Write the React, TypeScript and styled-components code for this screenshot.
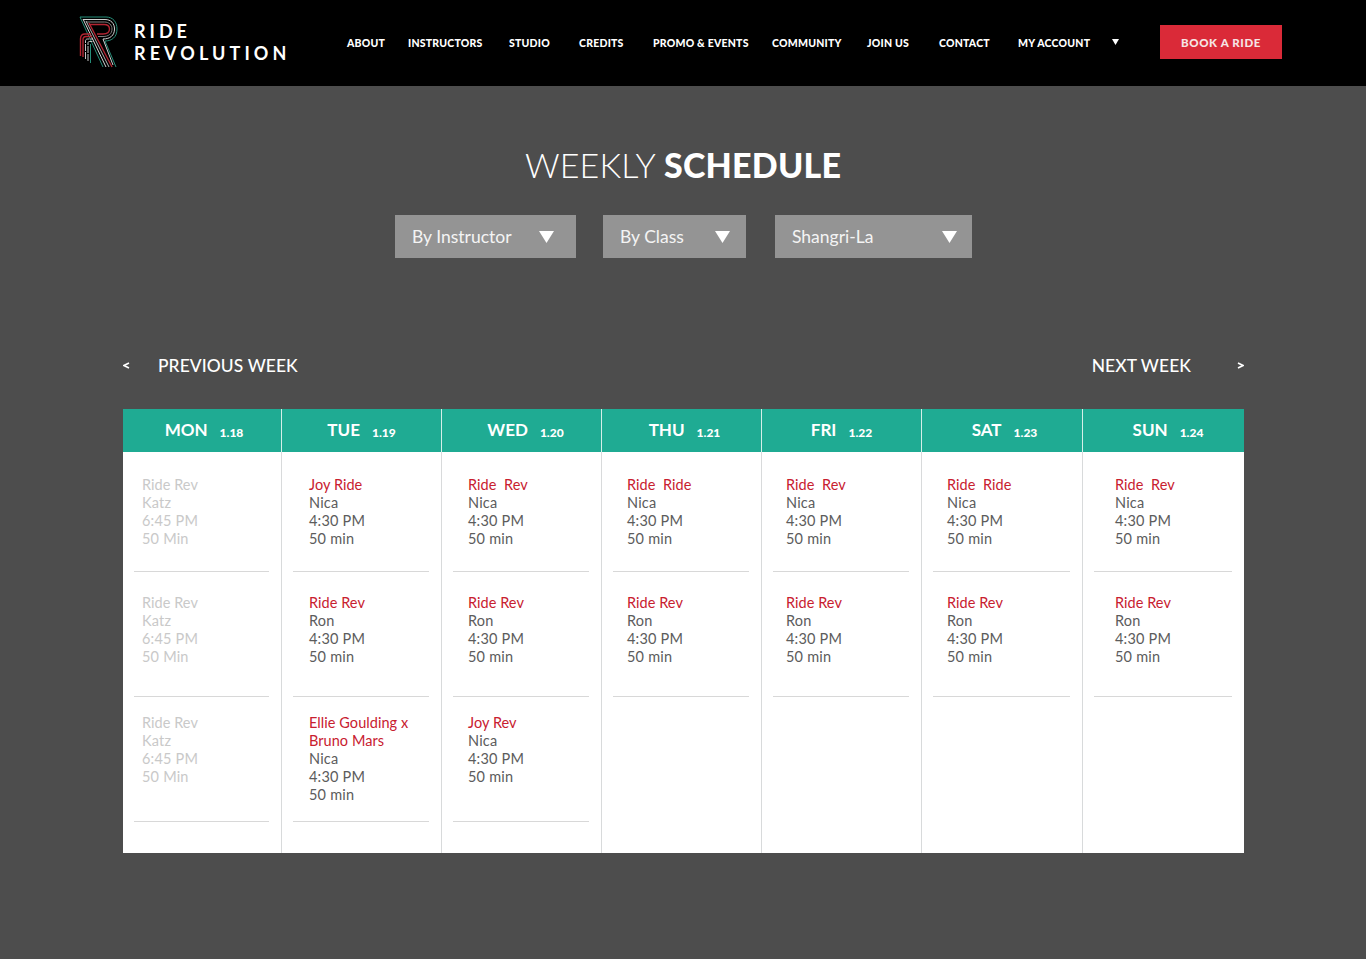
import React from 'react';
import styled, { createGlobalStyle } from 'styled-components';

const GlobalStyle = createGlobalStyle`
  html, body {
    margin: 0;
    padding: 0;
    background-color: #4d4d4d;
    font-family: 'Lato', 'Liberation Sans', sans-serif;
  }
`;

const Page = styled.div`
  width: 1366px;
  height: 959px;
  overflow: hidden;
`;

const Header = styled.header`
  height: 86px;
  background-color: #000;
  display: flex;
  align-items: center;
  padding-left: 79px;
`;

const Brand = styled.div`
  display: flex;
  align-items: flex-start;
  gap: 16px;
  width: 268px;
  height: 52px;
  margin-top: -2px;
`;

const BrandText = styled.div`
  display: flex;
  flex-direction: column;
  padding-top: 4px;
  color: #fff;
  font-size: 18px;
  font-weight: 700;
  line-height: 22px;
  white-space: nowrap;
`;

const BrandLine = styled.span<{ $spacing: number }>`
  letter-spacing: ${(p) => p.$spacing}px;
`;

const Nav = styled.nav`
  display: flex;
  align-items: center;
  height: 100%;
`;

const NavLink = styled.a<{ $w: number }>`
  width: ${(p) => p.$w}px;
  color: #fff;
  font-size: 10.5px;
  font-weight: 900;
  letter-spacing: 0.22px;
  text-transform: uppercase;
  white-space: nowrap;
`;

const Caret = styled.svg`
  width: 7px;
  height: 6px;
  margin-right: 41px;
  margin-bottom: 2px;
  fill: #fff;
`;

const BookButton = styled.a`
  width: 122px;
  height: 34px;
  margin-bottom: 2px;
  background-color: #da2a38;
  color: #f6e4e4;
  font-size: 11.5px;
  font-weight: 900;
  letter-spacing: 0.6px;
  display: flex;
  align-items: center;
  justify-content: center;
`;

const Title = styled.h1`
  margin: 59px 0 0;
  height: 40px;
  line-height: 40px;
  text-align: center;
  color: #fff;
  font-size: 34px;
  font-weight: 300;
  letter-spacing: 0.2px;

  strong {
    font-weight: 900;
  }
`;

const Filters = styled.div`
  display: flex;
  margin: 30px 0 0 395px;
`;

const Select = styled.div<{ $w: number; $gap: number; $pr: number }>`
  width: ${(p) => p.$w}px;
  height: 43px;
  margin-right: ${(p) => p.$gap}px;
  box-sizing: border-box;
  padding: 0 ${(p) => p.$pr}px 0 17px;
  background-color: #949494;
  color: #f4f4f4;
  font-size: 17.5px;
  display: flex;
  align-items: center;
  justify-content: space-between;
`;

const Arrow = styled.svg`
  width: 15px;
  height: 12px;
  fill: #fff;
`;

const WeekNav = styled.div`
  display: flex;
  justify-content: space-between;
  margin: 97px 122px 0 123px;
  height: 20px;
  color: #fff;
  font-size: 17.4px;
  font-weight: 500;
  line-height: 20px;
`;

const WeekLink = styled.div`
  display: flex;
  align-items: center;
`;

const WeekLabel = styled.span<{ $side: 'left' | 'right' }>`
  margin: ${(p) => (p.$side === 'left' ? '0 0 0 28px' : '0 46px 0 0')};
  padding-top: 1px;
  letter-spacing: 0.1px;
`;

const WeekArrow = styled.svg`
  width: 7px;
  height: 7px;
  fill: none;
  stroke: #fff;
  stroke-width: 1.6;
`;

const Schedule = styled.div`
  display: grid;
  grid-template-columns: 159px repeat(4, 160px) 161px 161px;
  width: 1121px;
  height: 444px;
  margin: 34px 0 0 123px;
  background-color: #fff;
`;

const DayColumn = styled.section`
  display: flex;
  flex-direction: column;
  box-sizing: border-box;
  border-right: 1px solid #d8dadb;

  &:last-child {
    border-right: 0;
  }
`;

const DayHead = styled.div<{ $pl: number }>`
  height: 43px;
  flex: none;
  box-sizing: border-box;
  padding-left: ${(p) => p.$pl}px;
  background-color: #1fab93;
  margin-right: -1px;
  border-right: 1px solid #d5efe9;
  display: flex;
  align-items: center;
  justify-content: center;
  gap: 12px;
  color: #fff;

  ${DayColumn}:last-child & {
    margin-right: 0;
    border-right: 0;
  }
`;

const DayName = styled.span`
  font-size: 17px;
  font-weight: 700;
  padding-bottom: 2px;
`;

const DayDate = styled.span`
  font-size: 12px;
  font-weight: 900;
  padding-top: 3px;
`;

const Card = styled.div<{ $h: number; $top: number; $indent: number }>`
  height: ${(p) => p.$h}px;
  box-sizing: border-box;
  flex: none;
  margin: 0 12px 0 11px;
  padding: ${(p) => p.$top}px 0 0 ${(p) => p.$indent - 11}px;
  border-bottom: 1px solid #d8d8d8;
  font-size: 14.5px;
  line-height: 18px;
  letter-spacing: 0.2px;
`;

const ClassName = styled.div<{ $faded: boolean }>`
  color: ${(p) => (p.$faded ? '#c9c9c9' : '#c8202f')};
  white-space: pre-line;
  letter-spacing: 0.05px;
`;

const Line = styled.div<{ $faded: boolean }>`
  color: ${(p) => (p.$faded ? '#c9c9c9' : '#5c5c5c')};
`;

type ClassItem = { name: string; who: string; time: string; len: string };

type Day = { name: string; date: string; indent: number; headPad: number; faded?: boolean; classes: ClassItem[] };

const ron: ClassItem = { name: 'Ride Rev', who: 'Ron', time: '4:30 PM', len: '50 min' };
const nica = (name: string): ClassItem => ({ name, who: 'Nica', time: '4:30 PM', len: '50 min' });
const katz: ClassItem = { name: 'Ride Rev', who: 'Katz', time: '6:45 PM', len: '50 Min' };

const days: Day[] = [
  { name: 'MON', date: '1.18', indent: 19, headPad: 4, faded: true, classes: [katz, katz, katz] },
  { name: 'TUE', date: '1.19', indent: 27, headPad: 0, classes: [nica('Joy Ride'), ron, nica('Ellie Goulding x\nBruno Mars')] },
  { name: 'WED', date: '1.20', indent: 26, headPad: 8, classes: [nica('Ride\u00a0\u00a0Rev'), ron, nica('Joy Rev')] },
  { name: 'THU', date: '1.21', indent: 25, headPad: 6, classes: [nica('Ride\u00a0\u00a0Ride'), ron] },
  { name: 'FRI', date: '1.22', indent: 24, headPad: 0, classes: [nica('Ride\u00a0\u00a0Rev'), ron] },
  { name: 'SAT', date: '1.23', indent: 25, headPad: 5, classes: [nica('Ride\u00a0\u00a0Ride'), ron] },
  { name: 'SUN', date: '1.24', indent: 32, headPad: 9, classes: [nica('Ride\u00a0\u00a0Rev'), ron] },
];

const navItems: [string, number][] = [
  ['About', 61],
  ['Instructors', 101],
  ['Studio', 70],
  ['Credits', 74],
  ['Promo & Events', 119],
  ['Community', 95],
  ['Join Us', 72],
  ['Contact', 79],
  ['My Account', 94],
];

// row heights and top padding for the three slots in a column
const slots = [
  { h: 120, top: 24 },
  { h: 125, top: 22 },
  { h: 125, top: 17 },
];

const Logo: React.FC = () => (
  <svg width="39" height="52" viewBox="0 0 39 52" fill="none">
    <g strokeWidth="1" opacity="0.9">
      <path d="M1 1 H27 C34 1 38 6 38 13 C38 21 33 25 26 25 L37 51" stroke="#2a9d86" />
      <path d="M4 3.5 H26 C32 3.5 35.5 7.5 35.5 13 C35.5 19.5 31 23 24 23 L34 49" stroke="#e8e8e8" />
      <path d="M1 1 L24 51" stroke="#2a9d86" />
      <path d="M4 3 L27 51" stroke="#f0f0f0" />
      <path d="M7 6 H25.5 C30 6 33 9 33 13 C33 18 29.5 20.5 24 20.5 H19" stroke="#8d8d8d" />
      <path d="M10 8.5 H25 C28.5 8.5 30.5 10.5 30.5 13 C30.5 16.5 28 18 24 18 H18" stroke="#c62a38" strokeWidth="1.4" />
      <path d="M7 5 L30 51" stroke="#c9c9c9" />
      <path d="M10 7 L33 51" stroke="#c62a38" strokeWidth="1.4" />
      <path d="M1.5 40 V23 C1.5 20 3 18 6 18 H12" stroke="#c62a38" strokeWidth="1.4" />
      <path d="M4 41 V24 C4 22 5 20.5 7 20.5 H13" stroke="#c62a38" strokeWidth="1.4" />
      <path d="M6.5 43 V25 C6.5 24 7 23 8.5 23 H14" stroke="#d9d9d9" strokeDasharray="7 1" />
      <path d="M9 45 V27 C9 26 9.5 25.5 10.5 25.5 H15" stroke="#d9d9d9" strokeDasharray="7 1" />
      <path d="M11.5 47 V28" stroke="#2a9d86" />
    </g>
  </svg>
);

const SelectBox: React.FC<{ label: string; w: number; gap: number; pr: number }> = ({ label, w, gap, pr }) => (
  <Select $w={w} $gap={gap} $pr={pr}>
    <span>{label}</span>
    <Arrow viewBox="0 0 15 12">
      <polygon points="0,0 15,0 7.5,12" />
    </Arrow>
  </Select>
);

const App: React.FC = () => (
  <Page>
    <GlobalStyle />
    <Header>
      <Brand>
        <Logo />
        <BrandText>
          <BrandLine $spacing={4}>RIDE</BrandLine>
          <BrandLine $spacing={4.1}>REVOLUTION</BrandLine>
        </BrandText>
      </Brand>
      <Nav>
        {navItems.map(([label, w]) => (
          <NavLink key={label} $w={w}>
            {label}
          </NavLink>
        ))}
        <Caret viewBox="0 0 7 6">
          <polygon points="0,0 7,0 3.5,6" />
        </Caret>
        <BookButton>BOOK A RIDE</BookButton>
      </Nav>
    </Header>
    <Title>
      WEEKLY <strong>SCHEDULE</strong>
    </Title>
    <Filters>
      <SelectBox label="By Instructor" w={181} gap={27} pr={22} />
      <SelectBox label="By Class" w={143} gap={29} pr={16} />
      <SelectBox label="Shangri-La" w={197} gap={0} pr={15} />
    </Filters>
    <WeekNav>
      <WeekLink>
        <WeekArrow viewBox="0 0 7 7">
          <polyline points="6,1 1,3.5 6,6" />
        </WeekArrow>
        <WeekLabel $side="left">PREVIOUS WEEK</WeekLabel>
      </WeekLink>
      <WeekLink>
        <WeekLabel $side="right">NEXT WEEK</WeekLabel>
        <WeekArrow viewBox="0 0 7 7">
          <polyline points="1,1 6,3.5 1,6" />
        </WeekArrow>
      </WeekLink>
    </WeekNav>
    <Schedule>
      {days.map((day) => (
        <DayColumn key={day.name}>
          <DayHead $pl={day.headPad}>
            <DayName>{day.name}</DayName>
            <DayDate>{day.date}</DayDate>
          </DayHead>
          {day.classes.map((c, i) => (
            <Card key={i} $h={slots[i].h} $top={slots[i].top} $indent={day.indent}>
              <ClassName $faded={!!day.faded}>{c.name}</ClassName>
              <Line $faded={!!day.faded}>{c.who}</Line>
              <Line $faded={!!day.faded}>{c.time}</Line>
              <Line $faded={!!day.faded}>{c.len}</Line>
            </Card>
          ))}
        </DayColumn>
      ))}
    </Schedule>
  </Page>
);

export default App;
